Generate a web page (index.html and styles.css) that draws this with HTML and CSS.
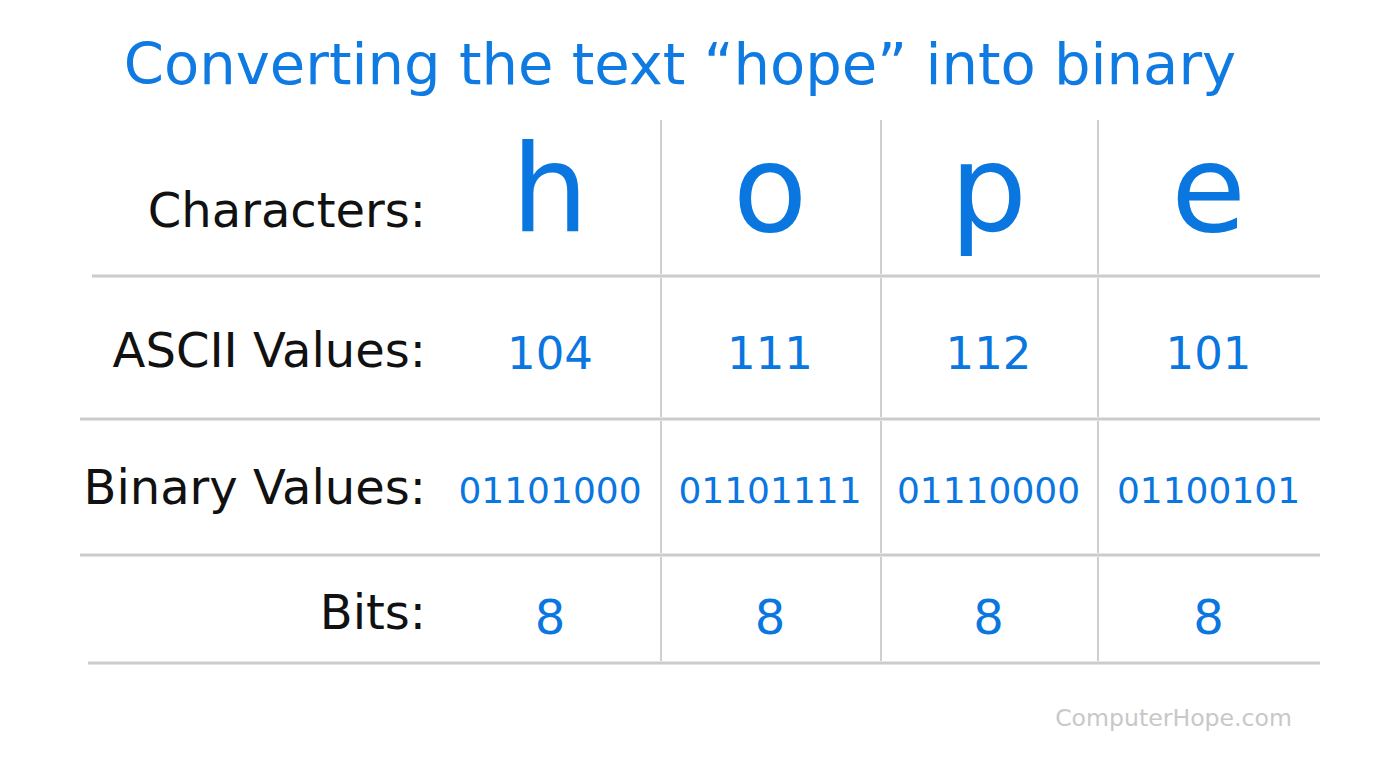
FILE: index.html
```html
<!DOCTYPE html>
<html lang="en">
<head>
<meta charset="utf-8">
<title>Converting the text “hope” into binary</title>
<link rel="stylesheet" href="styles.css">
</head>
<body>
<div class="page">
  <h1 class="title">Converting the text “hope” into binary</h1>
  <div class="table">
    <div class="row row-chars">
      <div class="label">Characters:</div>
      <div class="cell c1"><span class="big">h</span></div>
      <div class="cell c2"><span class="big">o</span></div>
      <div class="cell c3"><span class="big">p</span></div>
      <div class="cell c4"><span class="big">e</span></div>
    </div>
    <div class="divider d1"></div>
    <div class="row row-ascii">
      <div class="label">ASCII Values:</div>
      <div class="cell c1"><span class="num">104</span></div>
      <div class="cell c2"><span class="num">111</span></div>
      <div class="cell c3"><span class="num">112</span></div>
      <div class="cell c4"><span class="num">101</span></div>
    </div>
    <div class="divider d2"></div>
    <div class="row row-bin">
      <div class="label">Binary Values:</div>
      <div class="cell c1"><span class="bin">01101000</span></div>
      <div class="cell c2"><span class="bin">01101111</span></div>
      <div class="cell c3"><span class="bin">01110000</span></div>
      <div class="cell c4"><span class="bin">01100101</span></div>
    </div>
    <div class="divider d3"></div>
    <div class="row row-bits">
      <div class="label">Bits:</div>
      <div class="cell c1"><span class="bits">8</span></div>
      <div class="cell c2"><span class="bits">8</span></div>
      <div class="cell c3"><span class="bits">8</span></div>
      <div class="cell c4"><span class="bits">8</span></div>
    </div>
    <div class="divider d4"></div>
  </div>
  <div class="credit">ComputerHope.com</div>
</div>
</body>
</html>
```
FILE: styles.css
```css
html, body {
  margin: 0;
  padding: 0;
  background: #ffffff;
}
body {
  font-family: "DejaVu Sans", Verdana, sans-serif;
  width: 1376px;
  height: 780px;
  overflow: hidden;
}
.page {
  display: flex;
  flex-direction: column;
}
.title {
  margin: 0;
  padding-top: 31px;
  padding-right: 16px;
  font-weight: normal;
  font-size: 57.6px;
  line-height: normal;
  color: #0f7be2;
  text-align: center;
}
.table {
  margin-top: 22px;
  display: flex;
  flex-direction: column;
  width: 1240px;
  margin-left: 80px;
}
.row {
  display: grid;
  grid-template-columns: 360px 220px 220px 217px 223px;
}
.label {
  font-size: 48px;
  line-height: 1;
  color: #111111;
  text-align: right;
  padding-right: 14px;
  white-space: nowrap;
}
.cell {
  display: flex;
  justify-content: center;
  align-items: flex-start;
  color: #0a76e0;
  line-height: 1;
}
.c2, .c3, .c4 {
  border-left: 2px solid #cfcfcf;
}
.c2 > span, .c3 > span, .c4 > span {
  margin-left: -2px;
}
.row-chars { height: 154px; }
.row-ascii { height: 139px; }
.row-bin { height: 132px; }
.row-bits { height: 104px; }

.row-chars .label { padding-top: 66px; }
.row-chars .cell { padding-top: 8px; }
.big { font-size: 122px; }

.row-ascii .label { padding-top: 48px; }
.row-ascii .cell { padding-top: 53px; }
.num { font-size: 45px; }

.row-bin .label { padding-top: 42px; }
.row-bin .cell { padding-top: 52px; }
.bin { font-size: 36px; }

.row-bits .label { padding-top: 31px; }
.row-bits .cell { padding-top: 36px; }
.bits { font-size: 48px; }

.divider {
  height: 4px;
  background: linear-gradient(#e6e6e6 0, #e6e6e6 1px, #cccccc 1px, #cccccc 3px, #e3e3e3 3px, #e3e3e3 4px);
}
.d1 { margin-left: 12px; }
.d4 { margin-left: 8px; }

.credit {
  margin-top: 42px;
  align-self: flex-end;
  padding-right: 84px;
  font-size: 23.6px;
  line-height: 1;
  color: #c8c8c8;
}
```
